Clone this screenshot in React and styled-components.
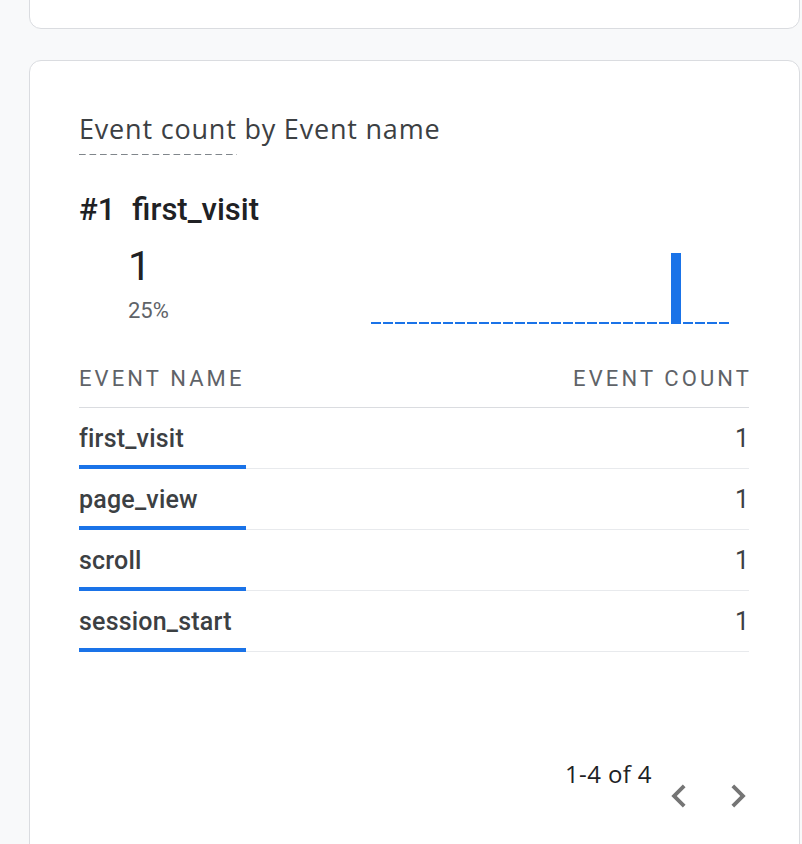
import styled, { createGlobalStyle } from "styled-components";

const GlobalStyle = createGlobalStyle`
  body {
    margin: 0;
    background: #f8f9fa;
    font-family: Roboto, "Liberation Sans", sans-serif;
    overflow: hidden;
  }
`;

const Page = styled.div`
  display: flex;
  flex-direction: column;
  gap: 31px;
  padding: 0 2px 0 29px;
  height: 844px;
  overflow: hidden;
`;

const Card = styled.section`
  background: #fff;
  border: 1px solid #dadce0;
  border-radius: 12px;
  box-sizing: border-box;
`;

const TopCard = styled(Card)`
  height: 49px;
  margin-top: -20px;
  flex-shrink: 0;
`;

const MainCard = styled(Card)`
  padding: 52px 50px 0 49px;
  flex: 1;
  margin-bottom: -20px;
`;

const Title = styled.h2`
  margin: 0;
  font-family: "Open Sans", Roboto, sans-serif;
  font-size: 27px;
  letter-spacing: 0.8px;
  font-weight: 400;
  color: #3c4043;
  line-height: 32px;
`;

const Dashed = styled.span`
  padding-bottom: 8px;
  background-image: linear-gradient(to right, #80868b 60%, transparent 60%);
  background-size: 10.5px 1px;
  background-repeat: repeat-x;
  background-position: left bottom;
`;

const TopLine = styled.div`
  display: flex;
  gap: 17px;
  margin-top: 47px;
  font-size: 31px;
  line-height: 36px;
  font-weight: 500;
  color: #202124;
`;

const Summary = styled.div`
  display: flex;
  align-items: flex-end;
  justify-content: space-between;
  padding-left: 49px;
  padding-right: 20px;
`;

const Stat = styled.div`
  display: flex;
  flex-direction: column;
`;

const Big = styled.div`
  font-size: 41px;
  line-height: 48px;
  color: #202124;
  margin-top: 14px;
`;

const Percent = styled.div`
  font-size: 22px;
  line-height: 26px;
  color: #5f6368;
  margin-top: 8px;
`;

const Chart = styled.svg`
  display: block;
`;

const Table = styled.div`
  margin-top: 42px;
`;

const HeaderRow = styled.div`
  display: flex;
  justify-content: space-between;
  font-size: 22px;
  line-height: 26px;
  letter-spacing: 3.1px;
  color: #5f6368;
  padding-bottom: 15px;
  border-bottom: 1px solid #dadce0;

  span:last-child {
    margin-right: -3px;
  }
`;

const Row = styled.div`
  display: flex;
  justify-content: space-between;
  align-items: center;
  height: 61px;
  box-sizing: border-box;
  border-bottom: 1px solid #e8eaed;
  font-size: 25px;
  line-height: 30px;
  color: #3c4043;
`;

const NameCell = styled.div`
  align-self: stretch;
  width: 167px;
  display: flex;
  align-items: center;
  box-sizing: border-box;
  border-bottom: 4px solid #1a73e8;
  margin-bottom: -1px;
  padding-top: 5px;
  font-weight: 500;
  letter-spacing: 0.2px;
`;

const Count = styled.div`
  padding-top: 2px;
`;

const Pager = styled.div`
  display: flex;
  justify-content: flex-end;
  align-items: flex-start;
  margin-top: 106px;
  margin-right: -12px;
`;

const PagerText = styled.div`
  font-family: "Open Sans", sans-serif;
  font-size: 24px;
  letter-spacing: 0.4px;
  line-height: 32px;
  color: #202124;
  margin-right: 4px;
`;

const Nav = styled.button`
  border: none;
  background: none;
  padding: 0;
  width: 46px;
  height: 46px;
  margin-top: 15px;
  margin-left: ${(p) => (p.$gap ? "13px" : "0")};
  color: #757575;
  display: flex;
  cursor: pointer;
`;

const rows = [
  { name: "first_visit", count: 1 },
  { name: "page_view", count: 1 },
  { name: "scroll", count: 1 },
  { name: "session_start", count: 1 },
];

function Spark() {
  const dashes = [];
  for (let x = 0; x < 358; x += 12) {
    dashes.push(<rect key={x} x={x} y={69} width={10} height={2} fill="#1a73e8" />);
  }
  return (
    <Chart width="358" height="71" viewBox="0 0 358 71">
      {dashes}
      <rect x={300} y={0} width={10} height={71} fill="#1a73e8" />
    </Chart>
  );
}

function Chevron({ dir }) {
  const d =
    dir === "left"
      ? "M15.41 7.41 14 6l-6 6 6 6 1.41-1.41L10.83 12z"
      : "M10 6 8.59 7.41 13.17 12l-4.58 4.59L10 18l6-6z";
  return (
    <svg width="46" height="46" viewBox="0 0 24 24">
      <path d={d} fill="currentColor" />
    </svg>
  );
}

export default function App() {
  return (
    <>
      <GlobalStyle />
      <Page>
        <TopCard />
        <MainCard>
          <Title>
            <Dashed>Event count</Dashed> by Event name
          </Title>
          <TopLine>
            <span>#1</span>
            <span>first_visit</span>
          </TopLine>
          <Summary>
            <Stat>
              <Big>1</Big>
              <Percent>25%</Percent>
            </Stat>
            <Spark />
          </Summary>
          <Table>
            <HeaderRow>
              <span>EVENT NAME</span>
              <span>EVENT COUNT</span>
            </HeaderRow>
            {rows.map((r) => (
              <Row key={r.name}>
                <NameCell>{r.name}</NameCell>
                <Count>{r.count}</Count>
              </Row>
            ))}
          </Table>
          <Pager>
            <PagerText>1-4 of 4</PagerText>
            <Nav aria-label="Previous page">
              <Chevron dir="left" />
            </Nav>
            <Nav $gap aria-label="Next page">
              <Chevron dir="right" />
            </Nav>
          </Pager>
        </MainCard>
      </Page>
    </>
  );
}
